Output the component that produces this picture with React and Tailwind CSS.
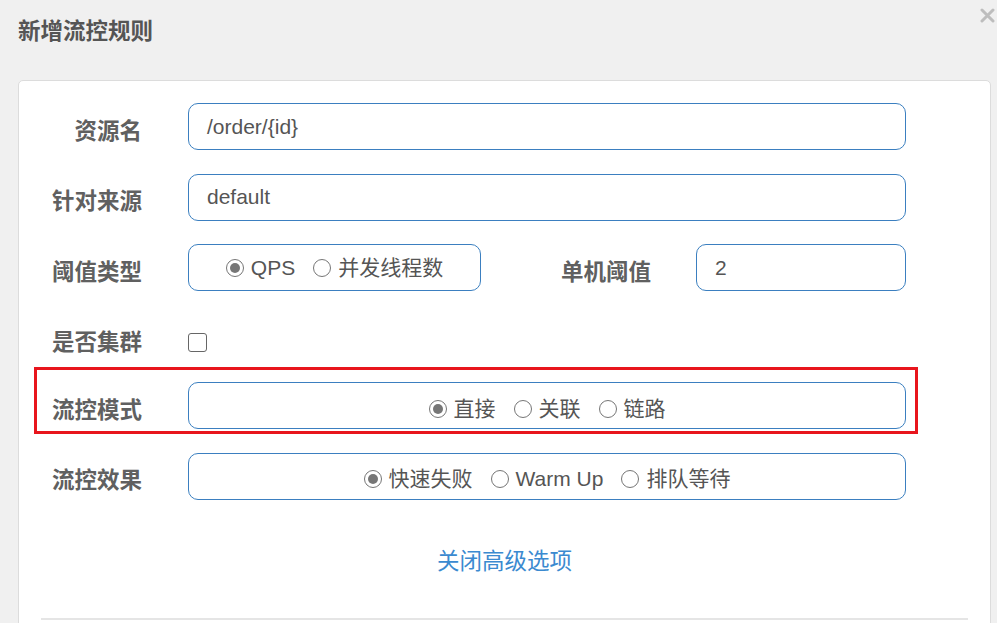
import React from 'react'

const font = { fontFamily: '"Liberation Sans", "Noto Sans CJK SC", sans-serif' }

const Radio = ({ checked }) => (
  <span className="w-[18px] h-[18px] rounded-full border-[1.5px] border-[#767676] bg-white flex items-center justify-center shrink-0">
    {checked && <span className="w-[10px] h-[10px] rounded-full bg-[#767676]" />}
  </span>
)

const Option = ({ checked, label }) => (
  <span className="flex items-center gap-[7px]">
    <Radio checked={checked} />
    <span className="text-[21px] text-[#555]">{label}</span>
  </span>
)

const Label = ({ children, className = '' }) => (
  <div className={`w-[123px] shrink-0 text-right text-[22.5px] font-bold text-[#606060] ${className}`}>
    {children}
  </div>
)

const Box = ({ className = '', children }) => (
  <div className={`h-[47px] border border-[#3b7fc0] rounded-[10px] bg-white flex items-center ${className}`}>
    {children}
  </div>
)

const App = () => {
  return (
    <div className="w-[997px] h-[623px] overflow-hidden bg-[#f0f0f0]" style={font}>
      {/* Header */}
      <div className="h-[80px] flex justify-between items-start">
        <h1 className="pl-[18px] pt-[17px] leading-[30px] text-[22.5px] font-bold text-[#555]">新增流控规则</h1>
        <svg className="mt-[8px] mr-[2px]" width="15" height="15" viewBox="0 0 15 15">
          <path d="M2 2 L13 13 M13 2 L2 13" stroke="#bdbdbd" strokeWidth="3" strokeLinecap="round" />
        </svg>
      </div>

      {/* Card */}
      <div className="relative ml-[18px] w-[973px] h-[600px] bg-white border border-[#dcdcdc] rounded-[5px] pt-[22px]">
        <div className="flex flex-col gap-[23.5px]">
          <div className="flex items-center gap-[46px]">
            <Label className="pt-[10px]">资源名</Label>
            <Box className="w-[718px] pl-[18px] text-[21px] text-[#555]">/order/{'{id}'}</Box>
          </div>

          <div className="flex items-center gap-[46px]">
            <Label className="pt-[10px]">针对来源</Label>
            <Box className="w-[718px] pl-[18px] text-[21px] text-[#555]">default</Box>
          </div>

          <div className="flex items-center gap-[46px]">
            <Label className="pt-[10px]">阈值类型</Label>
            <Box className="w-[293px] justify-center gap-[18px]">
              <Option checked label="QPS" />
              <Option label="并发线程数" />
            </Box>
            <div className="w-[379px] flex items-center justify-end gap-[45px]">
              <div className="pt-[10px] text-[22.5px] font-bold text-[#606060]">单机阈值</div>
              <Box className="w-[210px] pl-[18px] text-[21px] text-[#555]">2</Box>
            </div>
          </div>

          <div className="h-[44px] pt-[12px] flex items-center gap-[46px]">
            <Label>是否集群</Label>
            <span className="w-[19px] h-[19px] rounded-[3px] border-[1.5px] border-[#666] bg-white" />
          </div>

          <div className="flex items-center gap-[46px]">
            <Label className="pt-[10px]">流控模式</Label>
            <Box className="w-[718px] justify-center gap-[18px] pt-[6px]">
              <Option checked label="直接" />
              <Option label="关联" />
              <Option label="链路" />
            </Box>
          </div>

          <div className="flex items-center gap-[46px]">
            <Label className="pt-[10px]">流控效果</Label>
            <Box className="w-[718px] justify-center gap-[18px] pt-[6px]">
              <Option checked label="快速失败" />
              <Option label="Warm Up" />
              <Option label="排队等待" />
            </Box>
          </div>
        </div>

        <div className="mt-[47px] h-[30px] leading-[30px] text-center text-[22.5px] text-[#3b8ad0]">
          关闭高级选项
        </div>

        <div className="mt-[41px] mx-[22px] border-t-2 border-[#e5e5e5]" />

        {/* annotation box */}
        <div className="absolute left-[15px] top-[286px] w-[884px] h-[67px] border-[3px] border-[#e8151d]" />
      </div>
    </div>
  )
}

export default App
